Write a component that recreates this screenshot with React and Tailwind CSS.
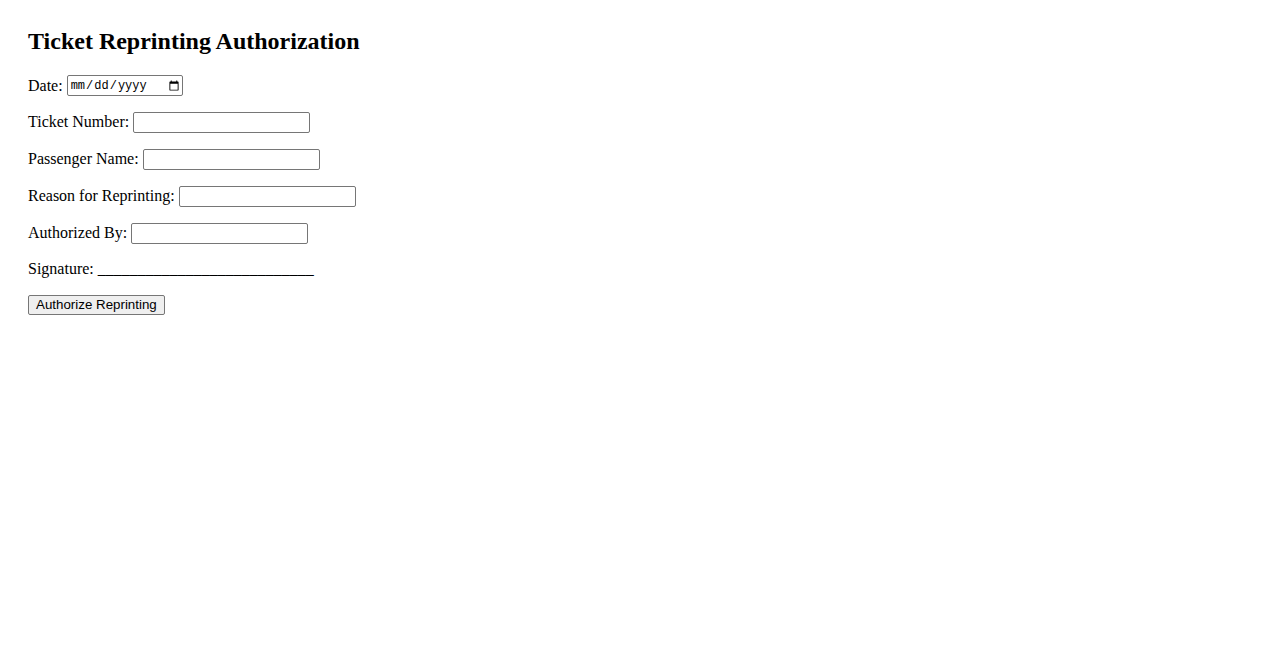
import React from 'react';

const fields = [
  { label: 'Ticket Number:', id: 'ticket' },
  { label: 'Passenger Name:', id: 'passenger' },
  { label: 'Reason for Reprinting:', id: 'reason' },
  { label: 'Authorized By:', id: 'authorized' },
];

const inputClass =
  'w-[177px] h-[21px] border border-[#767676] rounded-[2px] px-[2px] bg-white text-[13px] font-["Liberation_Sans",sans-serif]';

export default function App() {
  return (
    <div className="min-h-screen bg-white pl-[28px] pt-[28px] text-black font-['Liberation_Serif',serif] text-[16px]">
      <h2 className="text-[24px] font-bold leading-[27px] mb-[19px]">Ticket Reprinting Authorization</h2>

      <div className="flex flex-col gap-[15px]">
        <div className="h-[22px] flex items-center">
          <label htmlFor="date" className="pt-[1px]">Date:</label>
          <input
            id="date"
            type="date"
            className="ml-[4px] w-[116px] h-[21px] border border-[#767676] rounded-[2px] pl-[2px] pt-[1px] bg-white text-[12px] font-['Liberation_Mono',monospace]"
          />
        </div>

        {fields.map((f) => (
          <div key={f.id} className="h-[22px] flex items-center">
            <label htmlFor={f.id}>{f.label}</label>
            <input id={f.id} type="text" className={'ml-[4px] ' + inputClass} />
          </div>
        ))}

        <div className="h-[22px] -mt-[1px] flex items-center">
          <span>Signature: ___________________________</span>
        </div>

        <div className="flex">
          <button
            type="button"
            className="h-[20px] px-[7px] border border-[#767676] rounded-[2px] bg-[#efefef] text-[13.33px] leading-none font-['Liberation_Sans',sans-serif]"
          >
            Authorize Reprinting
          </button>
        </div>
      </div>
    </div>
  );
}
